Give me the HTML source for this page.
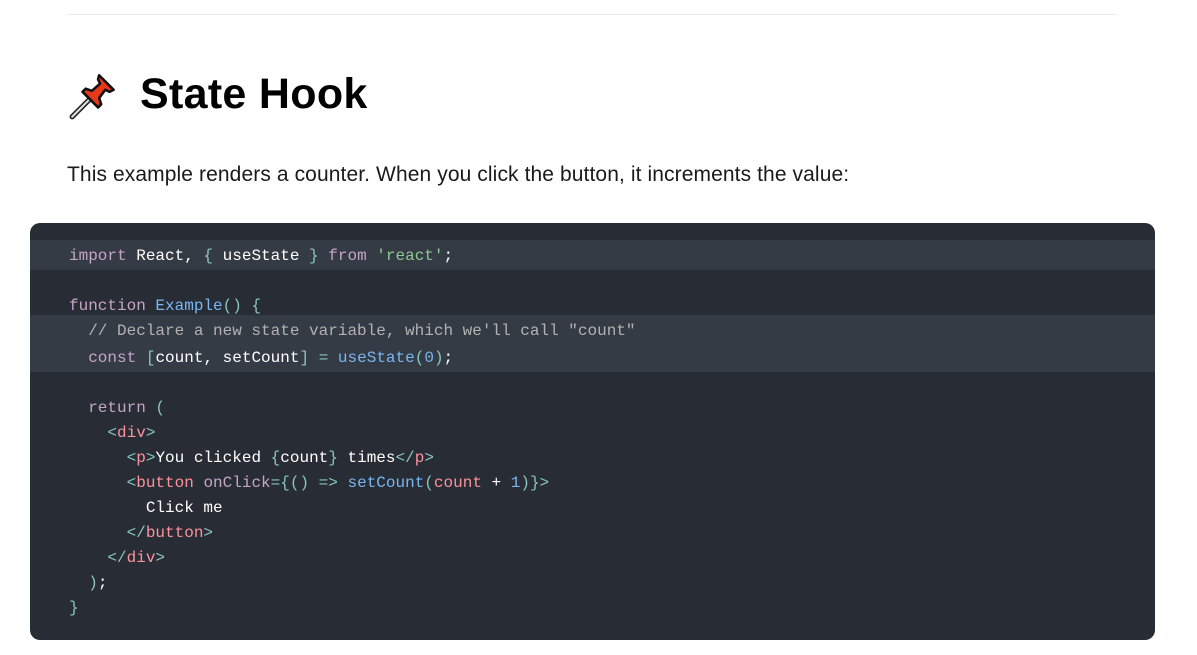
<!DOCTYPE html>
<html><head><style>
body{margin:0;background:#fff;width:1197px;height:655px;overflow:hidden;position:relative;font-family:"Liberation Sans",sans-serif}
.rule{position:absolute;left:67px;top:14px;width:1050px;height:1px;background:#ececec}
h1{position:absolute;left:140px;top:68px;margin:0;font-size:43px;font-weight:bold;color:#000;line-height:52px;letter-spacing:0.3px}
p.t{position:absolute;left:67px;top:162px;margin:0;font-size:21px;color:#1a1a1a;line-height:26px;letter-spacing:0.1px}
.code{position:absolute;left:30px;top:223px;width:1125px;height:417px;background:#282c34;border-radius:10px;overflow:hidden}
.hl{position:absolute;left:0;width:1125px;background:#353b45}
.l{position:absolute;left:39px;font-family:"Liberation Mono",monospace;font-size:16px;white-space:pre;color:#fff;line-height:20px}
.k{color:#c5a5c5}.s{color:#8dc891}.f{color:#79b6f2}.c{color:#b2b2b2}.p{color:#88c6be}.tg{color:#fc929e}
</style></head><body>
<div class="rule"></div>
<svg style="position:absolute;left:68px;top:70px" width="56" height="52" viewBox="0 0 54 48">
<path d="M4 44 L20 28" stroke="#222" stroke-width="5" stroke-linecap="round"/>
<path d="M4 44 L20 28" stroke="#ddd" stroke-width="2" stroke-linecap="round"/>
<path d="M30 4 L44 18 L40 20 L36 18 L30 26 L32 32 L29 35 L14 20 L17 17 L23 19 L31 12 L29 8 Z" fill="#e8381a" stroke="#111" stroke-width="2.5" stroke-linejoin="round"/>
</svg>
<h1>State Hook</h1>
<p class="t">This example renders a counter. When you click the button, it increments the value:</p>
<div class="code">
<div class="hl" style="top:17px;height:30px"></div>
<div class="hl" style="top:92px;height:57px"></div>
<div class="l" style="top:23px"><span class="k">import</span> React, <span class="p">{</span> useState <span class="p">}</span> <span class="k">from</span> <span class="s">'react'</span>;</div>
<div class="l" style="top:73px"><span class="k">function</span> <span class="f">Example</span><span class="p">()</span> <span class="p">{</span></div>
<div class="l" style="top:98px"><span class="c">  // Declare a new state variable, which we'll call "count"</span></div>
<div class="l" style="top:125px">  <span class="k">const</span> <span class="p">[</span>count, setCount<span class="p">]</span> <span class="p">=</span> <span class="f">useState</span><span class="p">(</span><span class="f">0</span><span class="p">)</span>;</div>
<div class="l" style="top:175px">  <span class="k">return</span> <span class="p">(</span></div>
<div class="l" style="top:200px">    <span class="p">&lt;</span><span class="tg">div</span><span class="p">&gt;</span></div>
<div class="l" style="top:225px">      <span class="p">&lt;</span><span class="tg">p</span><span class="p">&gt;</span>You clicked <span class="p">{</span>count<span class="p">}</span> times<span class="p">&lt;/</span><span class="tg">p</span><span class="p">&gt;</span></div>
<div class="l" style="top:250px">      <span class="p">&lt;</span><span class="tg">button</span> <span class="k">onClick</span><span class="p">={()</span> <span class="p">=&gt;</span> <span class="f">setCount</span><span class="p">(</span><span class="tg">count</span> + <span class="f">1</span><span class="p">)}&gt;</span></div>
<div class="l" style="top:275px">        Click me</div>
<div class="l" style="top:300px">      <span class="p">&lt;/</span><span class="tg">button</span><span class="p">&gt;</span></div>
<div class="l" style="top:325px">    <span class="p">&lt;/</span><span class="tg">div</span><span class="p">&gt;</span></div>
<div class="l" style="top:350px">  <span class="p">)</span>;</div>
<div class="l" style="top:375px"><span class="p">}</span></div>
</div>
</body></html>
